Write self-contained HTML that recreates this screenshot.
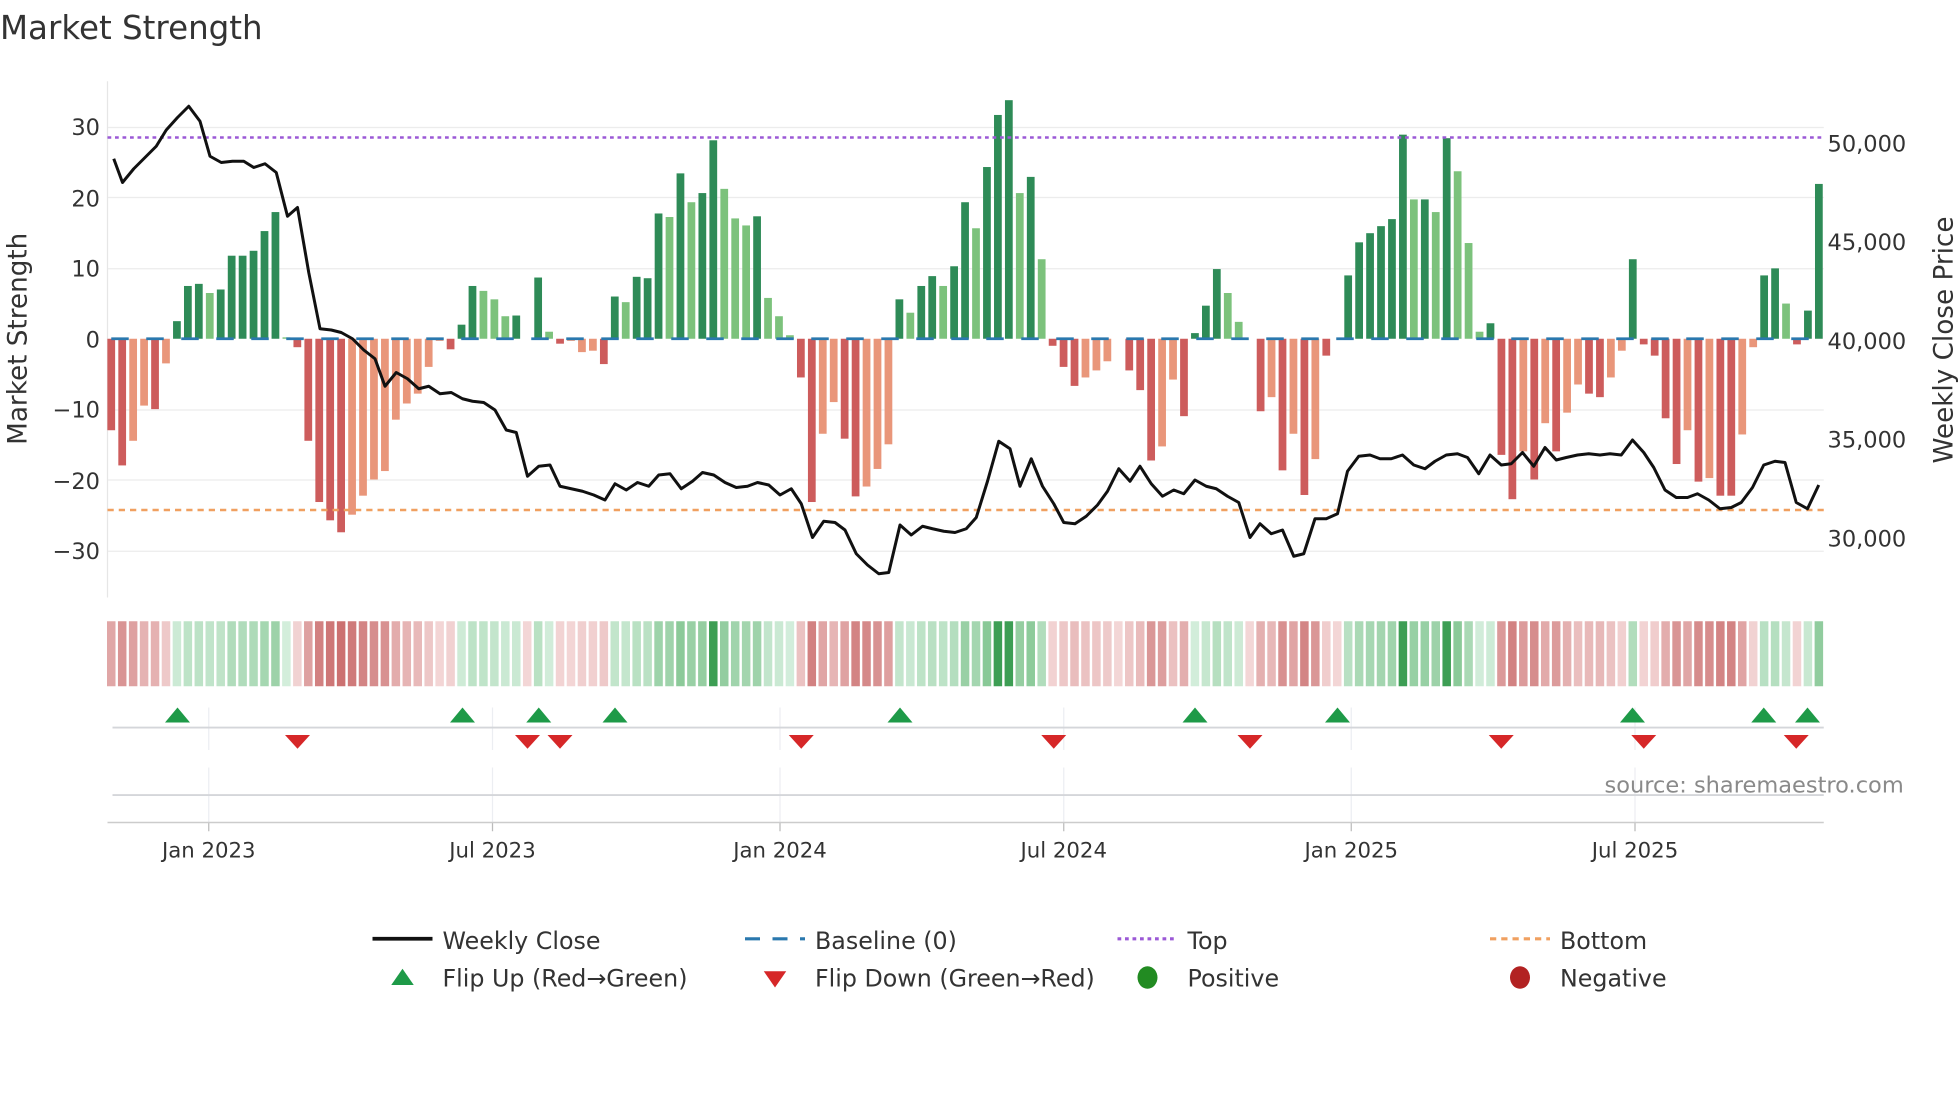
<!DOCTYPE html>
<html><head><meta charset="utf-8"><style>
html,body{margin:0;padding:0;background:#fff;width:1960px;height:1102px;overflow:hidden}
svg{display:block}
text{font-family:"DejaVu Sans","Liberation Sans",sans-serif;fill:#333}
</style></head><body>
<svg id="s" width="1960" height="1102" viewBox="0 0 1568 881.6" xmlns="http://www.w3.org/2000/svg">
<text x="0" y="31" font-size="26" fill="#333">Market Strength</text>
<g id="grid" stroke="#ececec" stroke-width="1"></g>
<line x1="86" y1="65" x2="86" y2="478" stroke="#e6e6e6"/>
<g id="bars"></g>
<line x1="86" y1="110" x2="1459" y2="110" stroke="#9b59d6" stroke-width="2" stroke-dasharray="3,3"/>
<line x1="86" y1="408" x2="1459" y2="408" stroke="#f0a060" stroke-width="2" stroke-dasharray="5,4"/>
<line x1="89" y1="271" x2="1459" y2="271" stroke="#2a78ae" stroke-width="2.2" stroke-dasharray="14,14"/>
<polyline id="price" fill="none" stroke="#111" stroke-width="2.4" stroke-linejoin="round"/>
<g font-size="18" text-anchor="end">
<text x="80" y="108">30</text><text x="80" y="165">20</text><text x="80" y="221">10</text><text x="80" y="278">0</text><text x="80" y="334">−10</text><text x="80" y="391">−20</text><text x="80" y="447">−30</text></g>
<g font-size="18"><text x="1462" y="121">50,000</text><text x="1462" y="200">45,000</text><text x="1462" y="279">40,000</text><text x="1462" y="358">35,000</text><text x="1462" y="437">30,000</text></g>
<text transform="translate(21,271) rotate(-90)" font-size="21" text-anchor="middle">Market Strength</text>
<text transform="translate(1562,272) rotate(-90)" font-size="21" text-anchor="middle">Weekly Close Price</text>
<g id="strip"></g>
<g id="vg" stroke="#eceef2" stroke-width="1"></g>
<line x1="90" y1="582" x2="1459" y2="582" stroke="#d4d6da" stroke-width="1.5"/>
<line x1="90" y1="636" x2="1459" y2="636" stroke="#d4d6da" stroke-width="1.5"/>
<line x1="86" y1="658" x2="1459" y2="658" stroke="#ccc" stroke-width="1.2"/>
<g id="mk"></g>
<text x="1523" y="634" font-size="18" text-anchor="end" style="fill:#8a8a8a">source: sharemaestro.com</text>
<g font-size="17" text-anchor="middle" id="xl"></g>
<g font-size="19">
<line x1="298" y1="751" x2="346" y2="751" stroke="#111" stroke-width="3"/>
<text x="354" y="759">Weekly Close</text>
<line x1="596" y1="751" x2="644" y2="751" stroke="#2a78ae" stroke-width="2.5" stroke-dasharray="12,10"/>
<text x="652" y="759">Baseline (0)</text>
<line x1="894" y1="751" x2="942" y2="751" stroke="#9b59d6" stroke-width="2.5" stroke-dasharray="3,3"/>
<text x="950" y="759">Top</text>
<line x1="1192" y1="751" x2="1240" y2="751" stroke="#f0a060" stroke-width="2.5" stroke-dasharray="5,4"/>
<text x="1248" y="759">Bottom</text>
<polygon points="313,788 331,788 322,775" fill="#1e9a48"/>
<text x="354" y="789">Flip Up (Red→Green)</text>
<polygon points="611,777 629,777 620,790" fill="#d62728"/>
<text x="652" y="789">Flip Down (Green→Red)</text>
<ellipse cx="918" cy="782" rx="8" ry="9" fill="#228b22"/>
<text x="950" y="789">Positive</text>
<ellipse cx="1216" cy="782" rx="8" ry="9" fill="#b22222"/>
<text x="1248" y="789">Negative</text>
</g>
</svg>
<script>
var NS="http://www.w3.org/2000/svg";
function el(p,t,a){var e=document.createElementNS(NS,t);for(var k in a)e.setAttribute(k,a[k]);document.getElementById(p).appendChild(e);return e;}
[102,158,215,328,384,441].forEach(function(y){el("grid","line",{x1:86,x2:1459,y1:y,y2:y});});
var v=[-13,-18,-14.5,-9.5,-10,-3.5,2.5,7.5,7.8,6.5,7,11.8,11.8,12.5,15.3,18,0.2,-1.2,-14.5,-23.2,-25.8,-27.5,-25,-22.3,-20,-18.8,-11.5,-9.2,-7.8,-4,-0.3,-1.5,2,7.5,6.8,5.6,3.2,3.3,0,8.7,1,-0.7,-0.3,-1.9,-1.7,-3.6,6,5.2,8.8,8.6,17.8,17.3,23.5,19.4,20.7,28.2,21.3,17.1,16.1,17.4,5.8,3.2,0.5,-5.5,-23.2,-13.5,-9,-14.2,-22.4,-21,-18.5,-15,5.6,3.7,7.5,8.9,7.5,10.3,19.4,15.7,24.4,31.8,33.9,20.7,23,11.3,-1,-4,-6.7,-5.5,-4.5,-3.2,0,-4.5,-7.3,-17.3,-15.3,-5.8,-11,0.8,4.7,9.9,6.5,2.4,0,-10.3,-8.3,-18.7,-13.5,-22.2,-17.1,-2.4,0,9,13.7,15,16,17,29,19.8,19.8,18,28.5,23.8,13.6,1,2.2,-16.5,-22.8,-16,-20,-12,-16,-10.5,-6.5,-7.8,-8.3,-5.5,-1.7,11.3,-0.8,-2.4,-11.3,-17.8,-13,-20.3,-19.8,-22.3,-22.3,-13.6,-1.2,9,10,5,-0.8,4,22];
var dark=[1,1,0,0,1,0,1,1,1,0,1,1,1,1,1,1,0,1,1,1,1,1,0,0,0,0,0,0,0,0,0,1,1,1,0,0,0,1,0,1,0,1,0,0,0,1,1,0,1,1,1,0,1,0,1,1,0,0,0,1,0,0,0,1,1,0,0,1,1,0,0,0,1,0,1,1,0,1,1,0,1,1,1,0,1,0,1,1,1,0,0,0,0,1,1,1,0,0,1,1,1,1,0,0,0,1,0,1,0,1,0,1,0,1,1,1,1,1,1,0,1,0,1,0,0,0,1,1,1,0,1,0,1,0,0,1,1,0,0,1,1,1,1,1,0,1,0,1,1,0,0,1,1,0,1,1,1];
var sp=8.757,x0=89,zy=271,k=5.63;
function mix(a,b,t){var r=[];for(var i=0;i<3;i++)r.push(Math.round(a[i]+(b[i]-a[i])*t));return "rgb("+r+")";}
v.forEach(function(val,i){
 var x=x0+sp*i,h=Math.abs(val)*k,c;
 if(val>0)c=dark[i]?"#2e8b57":"#7cc27c";else c=dark[i]?"#cd5c5c":"#e9967a";
 if(h>0.3)el("bars","rect",{x:x-3.1,width:6.2,y:val>0?zy-h:zy,height:h,fill:c});
 var t=Math.min(Math.abs(val)/30,1),sc;
 if(val>0)sc=t>0.9?"#3d9e54":mix([212,238,220],[120,192,135],t);
 else sc=mix([243,214,214],[200,104,104],t);
 el("strip","rect",{x:x-3.4,width:6.8,y:497,height:52,fill:sc});
});
var P=[[91,127],[98,146],[107,135],[116,126],[125,117],[133,104],[142,94],[151,85],[160,97],[168,125],[177,130],[186,129],[195,129],[203,134],[212,131],[221,138],[230,173],[238,166],[247,218],[256,263],[265,264],[273,266],[282,271],[291,280],[300,287],[308,309],[317,298],[326,303],[335,311],[343,309],[352,315],[361,314],[370,319],[378,321],[387,322],[396,328],[405,344],[413,346],[422,381],[431,373],[440,372],[448,389],[457,391],[466,393],[475,396],[484,400],[492,387],[501,392],[510,386],[519,389],[527,380],[536,379],[545,391],[554,385],[562,378],[571,380],[580,386],[589,390],[598,389],[606,386],[615,388],[624,396],[633,391],[641,403],[650,430],[659,417],[668,418],[676,424],[685,443],[694,452],[703,459],[711,458],[720,420],[729,428],[738,421],[746,423],[755,425],[764,426],[773,423],[781,414],[790,385],[799,353],[808,359],[816,389],[825,367],[834,389],[843,403],[851,418],[860,419],[869,413],[878,404],[886,393],[895,375],[904,385],[912,373],[921,387],[930,397],[939,392],[947,395],[956,384],[965,389],[973,391],[982,397],[991,402],[1000,430],[1008,419],[1017,427],[1026,424],[1035,445],[1043,443],[1052,415],[1061,415],[1070,411],[1078,377],[1087,365],[1096,364],[1104,367],[1113,367],[1122,364],[1131,372],[1140,375],[1148,369],[1157,364],[1166,363],[1174,366],[1183,379],[1192,364],[1201,372],[1209,371],[1218,362],[1227,373],[1236,358],[1245,368],[1253,366],[1262,364],[1271,363],[1280,364],[1288,363],[1297,364],[1306,352],[1315,362],[1323,374],[1332,392],[1341,398],[1350,398],[1358,395],[1367,400],[1376,407],[1385,406],[1393,402],[1402,390],[1411,372],[1420,369],[1428,370],[1437,402],[1446,407],[1455,388]];
document.getElementById("price").setAttribute("points",P.map(function(p){return p.join(",");}).join(" "));
var D=[[167,"Jan 2023"],[394,"Jul 2023"],[624,"Jan 2024"],[851,"Jul 2024"],[1081,"Jan 2025"],[1308,"Jul 2025"]];
D.forEach(function(d){
 el("vg","line",{x1:d[0],x2:d[0],y1:566,y2:600});
 el("vg","line",{x1:d[0],x2:d[0],y1:614,y2:658});
 el("vg","line",{x1:d[0],x2:d[0],y1:658,y2:665,stroke:"#bbb"});
 var t=el("xl","text",{x:d[0],y:686});t.textContent=d[1];
});
[142,370,431,492,720,956,1070,1306,1411,1446].forEach(function(x){el("mk","polygon",{points:(x-10)+",578 "+(x+10)+",578 "+x+",566",fill:"#1e9a48"});});
[238,422,448,641,843,1000,1201,1315,1437].forEach(function(x){el("mk","polygon",{points:(x-10)+",588 "+(x+10)+",588 "+x+",599",fill:"#d62728"});});
</script>
</body></html>
